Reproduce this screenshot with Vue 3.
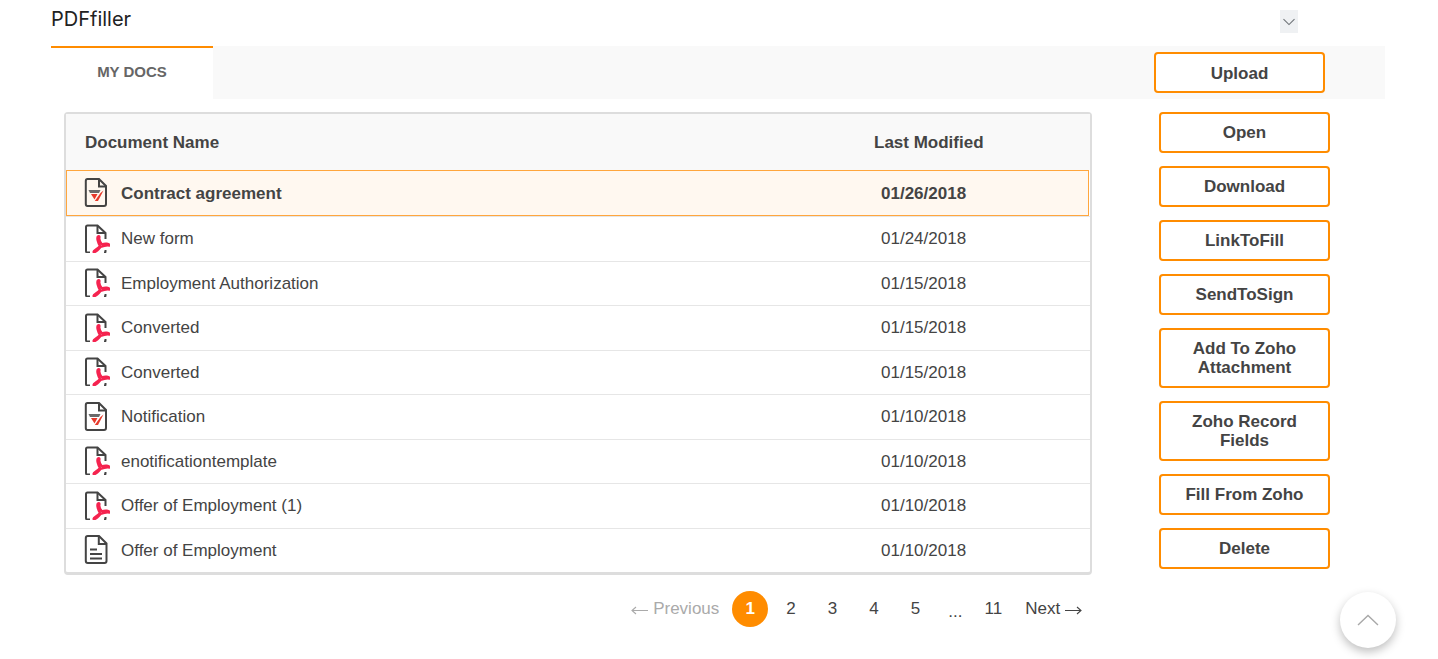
<script setup>
const rows = [
  { name: 'Contract agreement', date: '01/26/2018', type: 'sig', selected: true },
  { name: 'New form', date: '01/24/2018', type: 'pdf' },
  { name: 'Employment Authorization', date: '01/15/2018', type: 'pdf' },
  { name: 'Converted', date: '01/15/2018', type: 'pdf' },
  { name: 'Converted', date: '01/15/2018', type: 'pdf' },
  { name: 'Notification', date: '01/10/2018', type: 'sig' },
  { name: 'enotificationtemplate', date: '01/10/2018', type: 'pdf' },
  { name: 'Offer of Employment (1)', date: '01/10/2018', type: 'pdf' },
  { name: 'Offer of Employment', date: '01/10/2018', type: 'doc' },
]
const actions = [
  { label: 'Open' },
  { label: 'Download' },
  { label: 'LinkToFill' },
  { label: 'SendToSign' },
  { label: 'Add To Zoho Attachment', tall: true },
  { label: 'Zoho Record Fields', tall: true },
  { label: 'Fill From Zoho' },
  { label: 'Delete' },
]
const pages = ['2', '3', '4', '5']
</script>

<template>
  <div class="page">
    <header class="head">
      <span class="title">PDFfiller</span>
      <button class="collapse" aria-label="Collapse">
        <svg width="14" height="8" viewBox="0 0 14 8"><path d="M1.500 1.200 7 6.600l5.500-5.400" fill="none" stroke="#6f7478" stroke-width="1.100"/></svg>
      </button>
    </header>

    <div class="strip">
      <div class="tab">MY DOCS</div>
      <button class="btn upload">Upload</button>
    </div>

    <div class="body">
      <section class="left">
        <div class="table">
          <div class="row thead">
            <span class="c-name">Document Name</span>
            <span class="c-date">Last Modified</span>
          </div>
          <div v-for="(r, i) in rows" :key="i" class="row item" :class="{ selected: r.selected }">
            <span class="c-name">
              <svg v-if="r.type === 'pdf'" class="ico" viewBox="0 0 26 30">
                <path d="M6 29.500H3.500Q2 29.500 2 28V4Q2 2.500 3.500 2.500H13.500L21.500 10V16" fill="none" stroke="#444" stroke-width="2"/>
                <path d="M13.500 2.500V10H21.500" fill="none" stroke="#444" stroke-width="2"/>
                <path d="M20 29.500H20.500Q21.500 29.500 21.500 28.500V27" fill="none" stroke="#444" stroke-width="2"/>
                <path d="M14 13.500C12.500 14.500 14 20 16 23C14 26 9 27.500 9.500 29C11 30 14 27 16.500 24C19 23 23 22 25.500 22.500C25.500 20.500 21 20 18 21.500C16 19 15 15.500 15.500 14C15.500 13 14.500 13 14 13.500Z" fill="none" stroke="#f5234f" stroke-width="2.300" stroke-linejoin="round"/>
              </svg>
              <svg v-else-if="r.type === 'sig'" class="ico" viewBox="0 0 26 30">
                <path d="M3.500 2H15L22 9V27Q22 29 20 29H3.500Q1.800 29 1.800 27V4Q1.800 2 3.500 2Z" fill="none" stroke="#444" stroke-width="2"/>
                <path d="M15 2V9.500H22" fill="none" stroke="#444" stroke-width="2"/>
                <path d="M4.500 13H16.500L15 16H6Z" fill="#6a6a6a"/>
                <path d="M7 17H13.500L10.500 22.500Z" fill="#e6392b"/>
                <path d="M16.500 16 19.500 13.500 14 24H10.800Z" fill="#e6392b"/>
              </svg>
              <svg v-else class="ico" viewBox="0 0 26 30">
                <path d="M3.800 2H15L22.500 9.500V27Q22.500 29 20.500 29H3.800Q1.800 29 1.800 27V4Q1.800 2 3.800 2Z" fill="none" stroke="#444" stroke-width="2"/>
                <path d="M14.800 2V10H22.500" fill="none" stroke="#444" stroke-width="2"/>
                <path d="M6 15.500H13M6 20H18M6 24.500H18" fill="none" stroke="#444" stroke-width="1.800"/>
              </svg>
              <span class="nm">{{ r.name }}</span>
            </span>
            <span class="c-date d">{{ r.date }}</span>
          </div>
        </div>

        <nav class="pager">
          <span class="prev">
            <svg class="arrow" viewBox="0 0 17 9"><path d="M17 4.500H1M5 1 1 4.500 5 8" fill="none" stroke="#aaa" stroke-width="1.100"/></svg>
            Previous
          </span>
          <span class="cur">1</span>
          <span v-for="p in pages" :key="p" class="pg">{{ p }}</span>
          <span class="pg-narrow dots">...</span>
          <span class="pg-narrow">11</span>
          <span class="next">
            Next
            <svg class="arrow" viewBox="0 0 17 9"><path d="M0 4.500H16M12 1 16 4.500 12 8" fill="none" stroke="#444" stroke-width="1.100"/></svg>
          </span>
        </nav>
      </section>

      <aside class="actions">
        <button v-for="a in actions" :key="a.label" class="btn" :class="{ tall: a.tall }">{{ a.label }}</button>
      </aside>
    </div>

    <button class="top" aria-label="Back to top">
      <svg width="22" height="12" viewBox="0 0 22 12"><path d="M1 11 11 1.500 21 11" fill="none" stroke="#a8a8a8" stroke-width="1.400"/></svg>
    </button>
  </div>
</template>

<style>
html, body { margin: 0; background: #fff; overflow: hidden; }
</style>

<style scoped>
.page {
  position: relative;
  width: 1438px;
  height: 659px;
  overflow: hidden;
  font-family: "Liberation Sans", Arial, sans-serif;
  color: #444;
  box-sizing: border-box;
  padding: 0 53px 0 51px;
}
.head {
  height: 46px;
  position: relative;
  box-sizing: border-box;
  padding-top: 7px;
}
.title {
  font-family: Inter, "Liberation Sans", sans-serif;
  font-size: 20px;
  line-height: 24px;
  color: #222;
}
.collapse {
  position: absolute;
  left: 1229px;
  top: 10px;
  width: 18px;
  height: 23px;
  padding: 0;
  border: 0;
  background: #eff1f3;
  display: flex;
  align-items: center;
  justify-content: center;
}
.strip {
  height: 53px;
  background: #f9f9f9;
  display: flex;
  justify-content: space-between;
  align-items: flex-start;
  padding-right: 60px;
}
.tab {
  width: 162px;
  height: 53px;
  box-sizing: border-box;
  background: #fff;
  border-top: 2px solid #ff8c00;
  text-align: center;
  font-size: 15px;
  font-weight: 700;
  line-height: 48px;
  color: #666;
}
.btn {
  display: block;
  width: 171px;
  height: 41px;
  box-sizing: border-box;
  padding: 0 20px;
  border: 2px solid #ff8c00;
  border-radius: 4px;
  background: #fff;
  font-family: inherit;
  font-size: 17px;
  font-weight: 700;
  line-height: 19.500px;
  color: #444;
}
.btn.tall { height: 60px; }
.upload { margin-top: 6px; padding-top: 2px; }
.body {
  display: flex;
  align-items: flex-start;
  padding: 13px 0 0 13px;
}
.left { width: 1028px; }
.table {
  box-sizing: border-box;
  border: 2px solid #ddd;
  border-bottom-width: 3px;
  border-radius: 4px;
  height: 463px;
}
.row {
  display: flex;
  align-items: center;
  box-sizing: border-box;
  height: 44.500px;
  padding-top: 1px;
  border-top: 1px solid #e6e6e6;
  font-size: 17px;
}
.thead {
  height: 56px;
  border-top: 0;
  background: #f9f9f9;
  font-weight: 700;
}
.thead .c-date { margin-left: 1px; }
.item.selected {
  height: 46px;
  padding-top: 2px;
  margin-right: 1px;
  border: 1px solid #ffa63d;
  background: #fff8f0;
  font-weight: 700;
}
.c-name {
  display: flex;
  align-items: center;
  width: 807px;
  padding-left: 18px;
  box-sizing: border-box;
}
.thead .c-name { padding-left: 19px; }
.c-date { flex: 1; }
.d { padding-left: 8px; }
.selected .c-name { width: 806px; padding-left: 17px; }
.ico { width: 26px; height: 30px; flex: none; margin-bottom: 3px; }
.selected .ico { margin-bottom: 5px; }
.nm { margin-left: 11px; }
.pager {
  display: flex;
  align-items: center;
  justify-content: flex-end;
  height: 38px;
  margin-top: 15px;
  padding-right: 10px;
  font-size: 17px;
}
.arrow { width: 17px; height: 9px; vertical-align: -0.5px; }
.prev { color: #aaa; margin-right: 13px; white-space: nowrap; }
.cur {
  width: 36px;
  height: 36px;
  border-radius: 50%;
  background: #ff8c00;
  color: #fff;
  font-weight: 700;
  text-align: center;
  line-height: 36px;
  margin-right: 2px;
}
.pg {
  width: 41.500px;
  text-align: center;
}
.pg-narrow {
  width: 38px;
  text-align: center;
}
.dots { position: relative; top: 3px; }
.next { margin-left: 13px; white-space: nowrap; }
.actions {
  margin-left: 67px;
  display: flex;
  flex-direction: column;
  gap: 13px;
}
.top {
  position: absolute;
  left: 1340px;
  top: 592px;
  width: 56px;
  height: 56px;
  padding: 0;
  border: 0;
  border-radius: 50%;
  background: #fff;
  box-shadow: 0 4px 10px rgba(0, 0, 0, 0.25);
  display: flex;
  align-items: center;
  justify-content: center;
}
</style>
